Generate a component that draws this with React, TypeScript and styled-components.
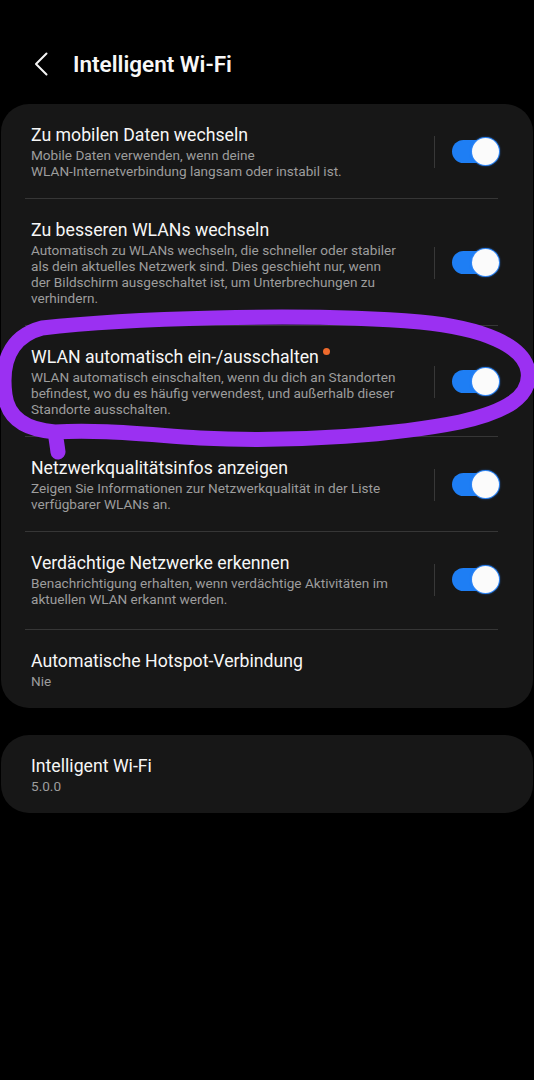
import React from 'react';
import styled, { createGlobalStyle } from 'styled-components';

const GlobalStyle = createGlobalStyle`
  html, body {
    margin: 0;
    padding: 0;
    background: #000;
  }
  body {
    font-family: Roboto, "Noto Sans", "Liberation Sans", sans-serif;
    -webkit-font-smoothing: antialiased;
  }
`;

type Setting = {
  title: string;
  lines: string[];
  toggle?: boolean;
  badge?: boolean;
};

const settings: Setting[] = [
  {
    title: 'Zu mobilen Daten wechseln',
    lines: ['Mobile Daten verwenden, wenn deine', 'WLAN-Internetverbindung langsam oder instabil ist.'],
    toggle: true,
  },
  {
    title: 'Zu besseren WLANs wechseln',
    lines: [
      'Automatisch zu WLANs wechseln, die schneller oder stabiler',
      'als dein aktuelles Netzwerk sind. Dies geschieht nur, wenn',
      'der Bildschirm ausgeschaltet ist, um Unterbrechungen zu',
      'verhindern.',
    ],
    toggle: true,
  },
  {
    title: 'WLAN automatisch ein-/ausschalten',
    lines: [
      'WLAN automatisch einschalten, wenn du dich an Standorten',
      'befindest, wo du es häufig verwendest, und außerhalb dieser',
      'Standorte ausschalten.',
    ],
    toggle: true,
    badge: true,
  },
  {
    title: 'Netzwerkqualitätsinfos anzeigen',
    lines: ['Zeigen Sie Informationen zur Netzwerkqualität in der Liste', 'verfügbarer WLANs an.'],
    toggle: true,
  },
  {
    title: 'Verdächtige Netzwerke erkennen',
    lines: ['Benachrichtigung erhalten, wenn verdächtige Aktivitäten im', 'aktuellen WLAN erkannt werden.'],
    toggle: true,
  },
  {
    title: 'Automatische Hotspot-Verbindung',
    lines: ['Nie'],
  },
];

const Page = styled.div`
  position: relative;
  width: 534px;
  min-height: 1080px;
  background: #000;
  padding: 0 1px;
  box-sizing: border-box;
  overflow: hidden;
`;

const Header = styled.header`
  display: flex;
  align-items: center;
  height: 28px;
  padding: 50px 0 26px 32px;
`;

const BackButton = styled.button`
  display: flex;
  align-items: center;
  justify-content: center;
  width: 16px;
  height: 28px;
  padding: 0;
  margin-right: 24px;
  background: none;
  border: none;
  color: #f4f4f4;
`;

const HeaderTitle = styled.h1`
  margin: 0;
  font-size: 22.5px;
  line-height: 28px;
  font-weight: 600;
  color: #f7f7f7;
`;

const Card = styled.section<{ $gap?: number }>`
  background: #171717;
  border-radius: 28px;
  margin-bottom: ${(p) => p.$gap ?? 0}px;
`;

const Divider = styled.div`
  height: 1px;
  background: #363636;
  margin: 0 35px 0 24px;
`;

const Row = styled.div<{ $tall?: boolean }>`
  display: flex;
  align-items: center;
  padding: 20px 34px ${(p) => (p.$tall ? 22 : 19)}px 30px;
`;

const TextCol = styled.div`
  flex: 1;
  min-width: 0;
`;

const Title = styled.div`
  position: relative;
  display: inline-block;
  font-size: 17.7px;
  line-height: 22px;
  color: #f6f6f6;
  margin-bottom: 1px;
  white-space: nowrap;
`;

const Badge = styled.span`
  position: absolute;
  top: 2px;
  right: -11px;
  width: 7px;
  height: 7px;
  border-radius: 50%;
  background: #ee6a2c;
`;

const Sub = styled.div`
  font-size: 13.6px;
  line-height: 16px;
  color: #9d9d9d;
  white-space: nowrap;
`;

const VSep = styled.div`
  width: 1px;
  height: 32px;
  background: #383838;
  margin-right: 17px;
`;

const Track = styled.div`
  position: relative;
  width: 47px;
  height: 27px;
  flex: none;

  &::before {
    content: '';
    position: absolute;
    left: 0;
    right: 1px;
    top: 2px;
    height: 23px;
    border-radius: 12px;
    background: #1e7ef4;
  }
`;

const Thumb = styled.div`
  position: absolute;
  right: 0;
  top: 0;
  width: 27px;
  height: 27px;
  border-radius: 50%;
  background: #fbfbfb;
  box-shadow: 0 0 0 1px #2f86f6, 0 0 2px 1px rgba(40, 130, 246, 0.6);
`;

const Scribble = styled.svg`
  position: absolute;
  left: 0;
  top: 0;
  pointer-events: none;
`;

const Toggle = () => (
  <Track>
    <Thumb />
  </Track>
);

const SettingRow = ({ s, tall }: { s: Setting; tall?: boolean }) => (
  <Row $tall={tall}>
    <TextCol>
      <Title>
        {s.title}
        {s.badge && <Badge />}
      </Title>
      {s.lines.map((l) => (
        <Sub key={l}>{l}</Sub>
      ))}
    </TextCol>
    {s.toggle && (
      <>
        <VSep />
        <Toggle />
      </>
    )}
  </Row>
);

export default function App() {
  return (
    <Page>
      <GlobalStyle />
      <Header>
        <BackButton aria-label="Zurück">
          <svg width="14" height="24" viewBox="0 0 14 24" fill="none">
            <path d="M12.5 1.5 L2 12 L12.5 22.5" stroke="currentColor" strokeWidth="2" strokeLinecap="round" strokeLinejoin="round" />
          </svg>
        </BackButton>
        <HeaderTitle>Intelligent Wi-Fi</HeaderTitle>
      </Header>

      <Card $gap={27}>
        {settings.map((s, i) => (
          <React.Fragment key={s.title}>
            {i > 0 && <Divider />}
            <SettingRow s={s} tall={i === 4} />
          </React.Fragment>
        ))}
      </Card>

      <Card>
        <SettingRow s={{ title: 'Intelligent Wi-Fi', lines: ['5.0.0'] }} />
      </Card>

      <Scribble width="534" height="1080" viewBox="0 0 534 1080">
        <path
          d="M58 452 C57 444 56 438 55 432 C28 430 8 420 5 395 C1 365 8 337 42 328 C120 319 300 312 420 322 C484 328 524 346 528 371 C532 397 505 412 460 422 C400 434 300 443 200 438 C150 435 100 429 55 432"
          fill="none"
          stroke="#9b30f2"
          strokeWidth="15"
          strokeLinecap="round"
          strokeLinejoin="round"
        />
      </Scribble>
    </Page>
  );
}
